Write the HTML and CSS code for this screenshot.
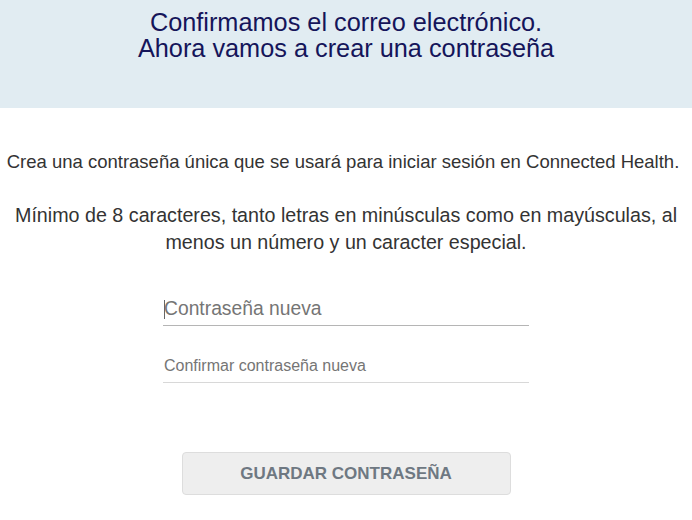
FILE: index.html
```html
<!DOCTYPE html>
<html lang="es">
<head>
<meta charset="utf-8">
<link rel="stylesheet" href="styles.css">
</head>
<body>
<header class="banner">
  <h1 class="title">Confirmamos el correo electrónico.<br>Ahora vamos a crear una contraseña</h1>
</header>
<main class="content">
  <p class="lead">Crea una contraseña única que se usará para iniciar sesión en Connected Health.</p>
  <p class="rules">Mínimo de 8 caracteres, tanto letras en minúsculas como en mayúsculas, al menos un número y un caracter especial.</p>
  <form class="form">
    <div class="field focused"><span class="caret"></span><input type="password" placeholder="Contraseña nueva"></div>
    <div class="field"><input type="password" placeholder="Confirmar contraseña nueva"></div>
    <button type="button" class="save">GUARDAR CONTRASEÑA</button>
  </form>
</main>
</body>
</html>
```
FILE: styles.css
```css
* { box-sizing: border-box; }
html, body { margin: 0; padding: 0; background: #fff; }
body { font-family: "Liberation Sans", Arial, sans-serif; color: #333; }
.banner {
  background: #e1ecf2;
  height: 108px;
  padding-top: 9px;
}
.title {
  margin: 0;
  text-align: center;
  font-weight: normal;
  font-size: 25.3px;
  line-height: 26px;
  color: #15155a;
}
.content { display: flex; flex-direction: column; align-items: center; }
.lead {
  margin: 43px 6px 0 0;
  font-size: 18.5px;
  line-height: 22px;
  white-space: nowrap;
  text-align: center;
}
.rules {
  margin: 29px 0 0;
  padding: 0 10px;
  font-size: 19.7px;
  line-height: 27px;
  text-align: center;
}
.form { display: flex; flex-direction: column; align-items: center; margin-top: 36px; }
.field {
  position: relative;
  width: 366px;
  border-bottom: 1px solid #b5b5b5;
  height: 34px;
  display: flex;
  align-items: center;
}
.field + .field { margin-top: 23px; border-bottom-color: #d8d8d8; }
.field input {
  border: none; outline: none; background: transparent; padding: 0 0 0 1px;
  font-family: "Liberation Sans", Arial, sans-serif;
  font-size: 16px; color: #333; width: 100%;
}
.field.focused input { font-size: 19.3px; }
.field input::placeholder { color: #757575; }
.caret {
  position: absolute; left: 1px; top: 8px; width: 1px; height: 19px; background: #666;
}
.save {
  margin-top: 69px;
  width: 329px; height: 43px;
  background: #eee;
  border: 1px solid #ddd;
  border-radius: 4px;
  font-family: "Liberation Sans", Arial, sans-serif;
  font-weight: bold;
  font-size: 17px;
  color: #6e7882;
}
```
